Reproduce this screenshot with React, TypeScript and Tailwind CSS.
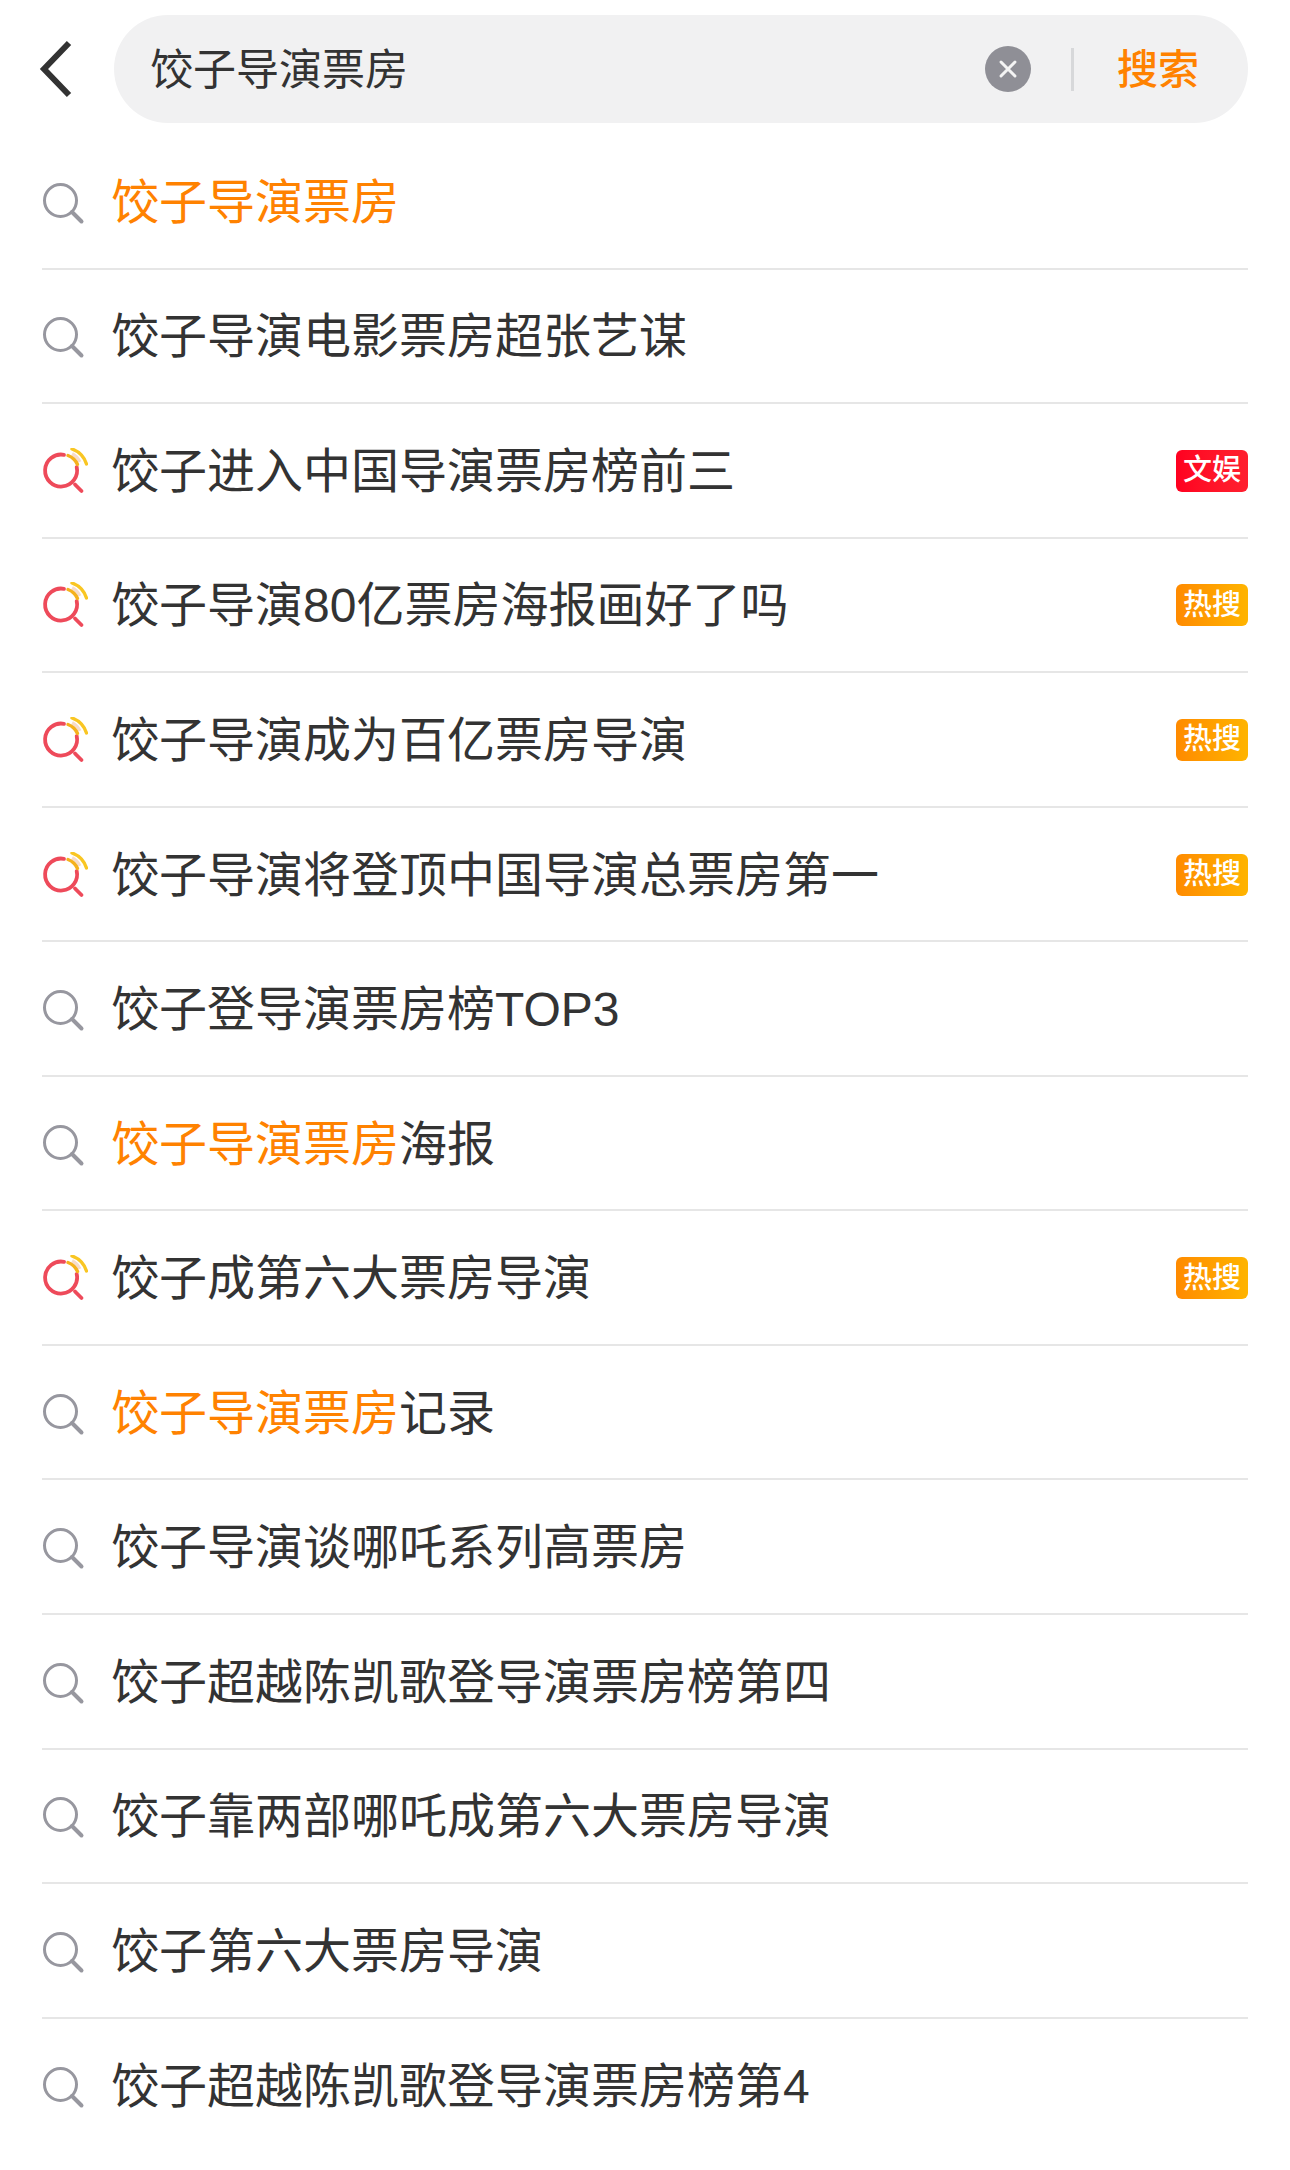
import React from "react";

const font = { fontFamily: '"Liberation Sans","Noto Sans CJK SC",sans-serif' };

function PlainIcon() {
  return (
    <svg width="44" height="44" viewBox="0 -1 44 44" fill="none" className="shrink-0">
      <circle cx="18.5" cy="18.5" r="16" stroke="#97979f" strokeWidth="3" />
      <path d="M30 30L39.5 39.5" stroke="#97979f" strokeWidth="4" strokeLinecap="round" />
    </svg>
  );
}

function HotIcon() {
  return (
    <svg width="46" height="48" viewBox="0 1.5 46 48" fill="none" className="shrink-0">
      <path d="M22 8.3A16 16 0 1 0 34.7 20.5" stroke="#ee4a5a" strokeWidth="3.8" strokeLinecap="round" />
      <path d="M33 38L39.5 44.5" stroke="#ee4a5a" strokeWidth="3.8" strokeLinecap="round" />
      <path d="M30 7.5C33 9 36 12 37.5 15.5" stroke="#f6dccb" strokeWidth="4" />
      <path d="M26 9C30 10.5 33.5 13.5 35.5 18" stroke="#f5b21c" strokeWidth="3.4" strokeLinecap="round" />
      <path d="M30 2.5C37 5 42 10 44.5 17.5" stroke="#f9c623" strokeWidth="3.4" strokeLinecap="round" />
    </svg>
  );
}

function Badge({ kind }: { kind: "yule" | "hot" }) {
  const isYule = kind === "yule";
  return (
    <span
      className={`ml-auto flex h-[42px] w-[72px] shrink-0 -translate-y-[1px] items-center justify-center rounded-[6px] text-[29px] font-medium leading-none text-white ${
        isYule ? "bg-gradient-to-r from-[#ff0020] to-[#ff1f2f]" : "bg-gradient-to-r from-[#ff8a00] to-[#ffb400]"
      }`}
    >
      {isYule ? "文娱" : "热搜"}
    </span>
  );
}

type Row = { text: string; hl?: string; hot?: boolean; badge?: "yule" | "hot" };

const rows: Row[] = [
  { text: "", hl: "饺子导演票房" },
  { text: "饺子导演电影票房超张艺谋" },
  { text: "饺子进入中国导演票房榜前三", hot: true, badge: "yule" },
  { text: "饺子导演80亿票房海报画好了吗", hot: true, badge: "hot" },
  { text: "饺子导演成为百亿票房导演", hot: true, badge: "hot" },
  { text: "饺子导演将登顶中国导演总票房第一", hot: true, badge: "hot" },
  { text: "饺子登导演票房榜TOP3" },
  { text: "海报", hl: "饺子导演票房" },
  { text: "饺子成第六大票房导演", hot: true, badge: "hot" },
  { text: "记录", hl: "饺子导演票房" },
  { text: "饺子导演谈哪吒系列高票房" },
  { text: "饺子超越陈凯歌登导演票房榜第四" },
  { text: "饺子靠两部哪吒成第六大票房导演" },
  { text: "饺子第六大票房导演" },
  { text: "饺子超越陈凯歌登导演票房榜第4" },
];

export default function App() {
  return (
    <div className="h-[2170px] w-[1290px] overflow-hidden bg-white" style={font}>
      <div className="flex items-center pt-[15px] pl-[38px] pr-[42px]">
        <svg width="36" height="62" viewBox="0 0 36 62" fill="none" className="shrink-0">
          <path d="M31 5L6 31L31 57" stroke="#333333" strokeWidth="6" />
        </svg>
        <div className="ml-[40px] flex h-[108px] flex-1 items-center rounded-[54px] bg-[#f1f1f2] pl-[36px]">
          <span className="pt-[3px] text-[43px] leading-none text-[#333333]">饺子导演票房</span>
          <span className="ml-auto flex h-[46px] w-[46px] items-center justify-center rounded-full bg-[#8f8f96]">
            <svg width="20" height="20" viewBox="0 0 20 20" fill="none">
              <path d="M3 3L17 17M17 3L3 17" stroke="#f4f4f4" strokeWidth="3" strokeLinecap="round" />
            </svg>
          </span>
          <span className="ml-[40px] h-[43px] w-[3px] bg-[#d7d8da]" />
          <span className="ml-[43px] mr-[49px] pt-[3px] text-[41px] font-medium leading-none text-[#ff8200]">搜索</span>
        </div>
      </div>

      <div className="mt-[12px] pl-[42px] pr-[42px]">
        {rows.map((r, i) => (
          <div
            key={i}
            className="flex h-[134.55px] items-center border-b-2 border-[#e6e6e6] pt-[3px] last:border-b-0"
          >
            <span className="flex w-[69px] shrink-0 items-center">{r.hot ? <HotIcon /> : <PlainIcon />}</span>
            <span className="text-[48px] leading-none text-[#333333]">
              {r.hl && <span className="text-[#ff8200]">{r.hl}</span>}
              {r.text}
            </span>
            {r.badge && <Badge kind={r.badge} />}
          </div>
        ))}
      </div>
    </div>
  );
}
